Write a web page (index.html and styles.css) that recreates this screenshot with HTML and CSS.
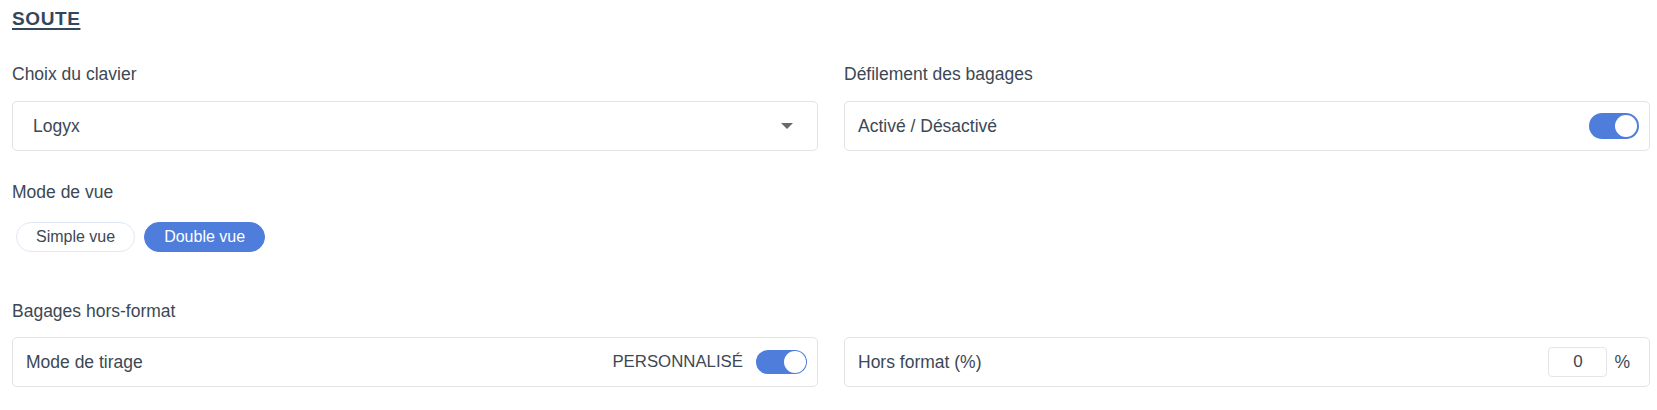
FILE: index.html
```html
<!DOCTYPE html>
<html lang="fr">
<head>
	<meta charset="utf-8">
	<title>Soute</title>
	<link rel="stylesheet" href="styles.css">
</head>
<body>
	<main class="settings">
		<h2 class="section-title">SOUTE</h2>

		<div class="row">
			<div class="field">
				<div class="field-label">Choix du clavier</div>
				<div class="box select-box">
					<span class="select-value">Logyx</span>
					<span class="caret"></span>
				</div>
			</div>
			<div class="field">
				<div class="field-label">Défilement des bagages</div>
				<div class="box">
					<span>Activé / Désactivé</span>
					<span class="switch on"><span class="knob"></span></span>
				</div>
			</div>
		</div>

		<div class="field view-mode">
			<div class="field-label">Mode de vue</div>
			<div class="pills">
				<span class="pill">Simple vue</span>
				<span class="pill active">Double vue</span>
			</div>
		</div>

		<div class="field oversize">
			<div class="field-label">Bagages hors-format</div>
			<div class="row">
				<div class="box">
					<span>Mode de tirage</span>
					<span class="box-right">
						<span class="small-text">PERSONNALISÉ</span>
						<span class="switch on slim"><span class="knob"></span></span>
					</span>
				</div>
				<div class="box">
					<span>Hors format (%)</span>
					<span class="box-right">
						<span class="num-input">0</span>
						<span class="unit">%</span>
					</span>
				</div>
			</div>
		</div>
	</main>
</body>
</html>
```

FILE: styles.css
```css
body {
	margin: 0;
	background: #fff;
	color: #3c4855;
	font-family: "Liberation Sans", Arial, sans-serif;
	font-size: 17.5px;
}
.settings {
	padding: 8px 7px 0 12px;
}
.section-title {
	margin: 0;
	font-size: 19px;
	line-height: 21px;
	font-weight: bold;
	letter-spacing: 0.6px;
	color: #34475a;
	text-decoration: underline;
	text-decoration-thickness: 2px;
	text-underline-offset: 3px;
}
.row {
	display: grid;
	grid-template-columns: 1fr 1fr;
	column-gap: 26px;
}
.row > .field {
	margin-top: 35px;
}
.field-label {
	line-height: 20px;
	margin-bottom: 17px;
}
.box {
	display: flex;
	align-items: center;
	justify-content: space-between;
	box-sizing: border-box;
	height: 50px;
	padding: 0 10px 0 13px;
	border: 1px solid #e3e3e3;
	border-radius: 5px;
	background: #fff;
}
.select-box {
	padding: 0 24px 0 20px;
}
.caret {
	width: 0;
	height: 0;
	border-left: 6px solid transparent;
	border-right: 6px solid transparent;
	border-top: 6px solid #6a6a6a;
}
.switch {
	position: relative;
	display: inline-block;
	width: 50px;
	height: 26px;
	border-radius: 13px;
	background: #d0d5dc;
}
.switch.on {
	background: #4f7ddb;
}
.switch .knob {
	position: absolute;
	top: 2px;
	left: 2px;
	width: 22px;
	height: 22px;
	border-radius: 50%;
	background: #fff;
}
.switch.on .knob {
	left: auto;
	right: 2px;
}
.switch.slim {
	width: 51px;
	height: 24px;
	border-radius: 12px;
}
.switch.slim .knob {
	top: 1px;
	right: 1px;
}
.view-mode {
	margin-top: 31px;
}
.view-mode .field-label {
	margin-bottom: 20px;
}
.pills {
	display: flex;
	gap: 9px;
	padding-left: 4px;
}
.pill {
	box-sizing: border-box;
	height: 30px;
	padding: 0 19px;
	border: 1px solid #e0e8f5;
	border-radius: 15px;
	font-size: 16px;
	line-height: 28px;
	color: #3c4855;
	background: #fff;
}
.pill.active {
	background: #4f7ddb;
	border-color: #4f7ddb;
	color: #fff;
}
.oversize {
	margin-top: 49px;
}
.oversize .field-label {
	margin-bottom: 16px;
}
.small-text {
	font-size: 16.8px;
}
.box-right {
	display: flex;
	align-items: center;
	gap: 13px;
}
.num-input {
	box-sizing: border-box;
	width: 59px;
	height: 30px;
	border: 1px solid #e5e5e5;
	border-radius: 4px;
	text-align: center;
	line-height: 28px;
	font-size: 17px;
}
.unit {
	margin-right: 9px;
	margin-left: -6px;
}
```
